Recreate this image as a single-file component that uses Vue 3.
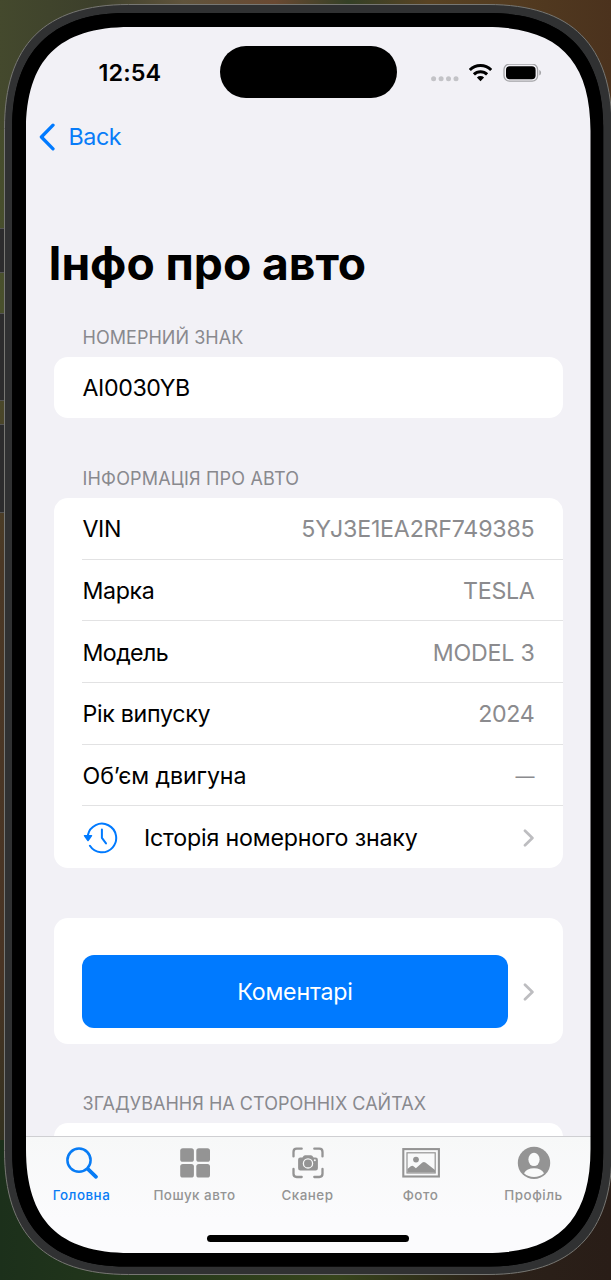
<script setup>
const rows = [
  { label: 'VIN', value: '5YJ3E1EA2RF749385', cls: 'vin' },
  { label: 'Марка', value: 'TESLA', cls: 'make' },
  { label: 'Модель', value: 'MODEL 3', cls: 'model' },
  { label: 'Рік випуску', value: '2024', cls: 'year' },
  { label: 'Об’єм двигуна', value: '—', cls: 'engine' },
]
const tabs = [
  { id: 'home', label: 'Головна' },
  { id: 'search', label: 'Пошук авто' },
  { id: 'scanner', label: 'Сканер' },
  { id: 'photo', label: 'Фото' },
  { id: 'profile', label: 'Профіль' },
]

// Rectangle with continuous-curvature corners: e is the corner extent, c the handle length.
function smoothRect(x, y, w, h, e, c) {
  const r = x + w
  const b = y + h
  const k = e - c
  return `M${x + e} ${y}H${r - e}C${r - k} ${y} ${r} ${y + k} ${r} ${y + e}V${b - e}` +
    `C${r} ${b - k} ${r - k} ${b} ${r - e} ${b}H${x + e}C${x + k} ${b} ${x} ${b - k} ${x} ${b - e}` +
    `V${y + e}C${x} ${y + k} ${x + k} ${y} ${x + e} ${y}Z`
}
const shellPath = smoothRect(4.5, 4.5, 607.5, 1270, 124, 83.7)
const bezelPath = smoothRect(12.2, 13, 591, 1253.5, 114, 74.7)
const screenPath = smoothRect(26, 27, 564.5, 1226, 104, 71.2)
</script>

<template>
  <div class="desktop">
    <i class="side-button action"></i>
    <i class="side-button up"></i>
    <i class="side-button down"></i>
    <svg class="device" width="611" height="1280" viewBox="0 0 611 1280">
      <path :d="shellPath" fill="#303132" stroke="#777773" stroke-width="1" />
      <path :d="bezelPath" fill="#000" />
      <path :d="screenPath" fill="#f2f1f6" />
    </svg>
    <div class="screen">
      <header class="status">
        <span class="time">12:54</span>
        <div class="island"></div>
        <svg class="indicators" width="112" height="24" viewBox="0 0 112 24">
          <g fill="#c3c3c7">
            <circle cx="3.6" cy="14.8" r="2.5" /><circle cx="11.1" cy="14.8" r="2.5" />
            <circle cx="18.5" cy="14.8" r="2.5" /><circle cx="26" cy="14.8" r="2.5" />
          </g>
          <g fill="none" stroke="#000" stroke-width="3">
            <path d="M39.8 6a15.2 15.2 0 0 1 21.4 0" />
            <path d="M43.9 10.4a9.4 9.4 0 0 1 13.2 0" />
          </g>
          <path d="M50.5 17.2l-3.6-3.7a5.2 5.2 0 0 1 7.2 0z" />
          <rect x="74" y="0.2" width="33.6" height="17" rx="5.4" fill="none" stroke="#a3a3a6" stroke-width="1.3" />
          <rect x="76" y="2.2" width="29.6" height="13" rx="3.7" />
          <path d="M109.3 6v5.6q1.8-.8 1.8-2.8t-1.8-2.8z" fill="#a3a3a6" />
        </svg>
      </header>
      <nav class="nav">
        <svg width="16" height="28" viewBox="0 0 16 28"><path d="M14 2.2L2.4 14 14 25.8" fill="none" stroke="#007aff" stroke-width="3.3" stroke-linecap="round" stroke-linejoin="round" /></svg>
        <span>Back</span>
      </nav>
      <h1>Інфо про авто</h1>
      <main>
        <h2 class="h-plate">НОМЕРНИЙ ЗНАК</h2>
        <section class="card plate">AI0030YB</section>
        <h2 class="h-info">ІНФОРМАЦІЯ ПРО АВТО</h2>
        <section class="card">
          <div v-for="row in rows" :key="row.label" class="row" :class="row.cls">
            <span class="label">{{ row.label }}</span>
            <span class="value">{{ row.value }}</span>
          </div>
          <div class="row history">
            <svg class="clock" width="36" height="34" viewBox="0 0 36 34">
              <g fill="none" stroke="#007aff" stroke-width="2" stroke-linecap="round" stroke-linejoin="round">
                <path d="M4.9 14A14.3 14.3 0 1 1 6.9 24.8" />
                <path d="M18.9 8.6v8.2l4.1 5.6" />
              </g>
              <path d="M1.5 14h7q1.3 0 .5 1.2l-3.2 4.5q-.8 1-1.6 0l-3.2-4.5q-.8-1.2.5-1.2z" fill="#007aff" />
            </svg>
            <span class="label">Історія номерного знаку</span>
            <svg class="chev" width="12" height="18" viewBox="0 0 12 18"><path d="M2 1.8L9.4 9 2 16.2" /></svg>
          </div>
        </section>
        <section class="card comments">
          <button>Коментарі</button>
          <svg class="chev" width="12" height="18" viewBox="0 0 12 18"><path d="M2 1.8L9.4 9 2 16.2" /></svg>
        </section>
        <h2 class="h-sites">ЗГАДУВАННЯ НА СТОРОННІХ САЙТАХ</h2>
        <section class="card partial"></section>
      </main>
      <footer class="tabbar">
        <div class="tabs">
          <div v-for="tab in tabs" :key="tab.id" class="tab" :class="tab.id">
            <svg v-if="tab.id === 'home'" width="40" height="34" viewBox="0 0 40 34">
              <g fill="none" stroke="currentColor" stroke-linecap="round"><circle cx="17" cy="14.2" r="11.6" stroke-width="2.5" /><path d="M26 23.2l8 7.6" stroke-width="3.8" /></g>
            </svg>
            <svg v-else-if="tab.id === 'search'" width="40" height="34" viewBox="0 0 40 34" fill="currentColor">
              <rect x="5.2" y="2.2" width="13.7" height="13.6" rx="2.6" /><rect x="21.3" y="2.2" width="13.7" height="13.6" rx="2.6" />
              <rect x="5.2" y="18" width="13.7" height="13.6" rx="2.6" /><rect x="21.3" y="18" width="13.7" height="13.6" rx="2.6" />
            </svg>
            <svg v-else-if="tab.id === 'scanner'" width="40" height="34" viewBox="0 0 40 34">
              <path d="M5.5 10.4V5.9q0-3.2 3.2-3.2h5M26.3 2.7h5q3.2 0 3.2 3.2v4.5M5.5 23v4.8q0 3.2 3.2 3.2h5M26.3 31h5q3.2 0 3.2-3.2V23" fill="none" stroke="currentColor" stroke-width="2.3" stroke-linecap="round" />
              <path d="M12.4 11.4h2l1.4-1.6q.5-.6 1.3-.6h5.8q.8 0 1.3.6l1.4 1.6h2q2.3 0 2.3 2.3v8.5q0 2.3-2.3 2.3H12.4q-2.3 0-2.3-2.3v-8.5q0-2.3 2.3-2.3z" fill="currentColor" />
              <circle cx="20" cy="17.4" r="4.6" fill="none" stroke="#f8f9f9" stroke-width="1.3" /><circle cx="26.8" cy="14.2" r="1" fill="#f8f9f9" />
            </svg>
            <svg v-else-if="tab.id === 'photo'" width="40" height="34" viewBox="0 0 40 34">
              <rect x="2.3" y="3.1" width="35.6" height="27.4" fill="none" stroke="currentColor" stroke-width="2.1" />
              <rect x="6" y="6.8" width="28.2" height="20.2" fill="none" stroke="currentColor" stroke-width="1.2" />
              <circle cx="15" cy="13.6" r="2.9" fill="currentColor" />
              <path d="M6.4 26.6v-3.5l3.4-2.8q1.6-1.1 3 .1l2.1 1.8 6.5-5.7q1.5-1.2 3 0l9.6 7.5v2.6z" fill="currentColor" />
            </svg>
            <svg v-else width="40" height="34" viewBox="0 0 40 34">
              <circle cx="20" cy="16.9" r="16.2" fill="currentColor" />
              <ellipse cx="20" cy="13.4" rx="5.6" ry="6.7" fill="#f9fafa" /><path d="M10 27.2q2.8-5 10-5t10 5q-4.2 3.8-10 3.8t-10-3.8z" fill="#f9fafa" />
            </svg>
            <span>{{ tab.label }}</span>
          </div>
        </div>
        <div class="home-indicator"></div>
      </footer>
    </div>
    <svg class="device corners" width="611" height="1280" viewBox="0 0 611 1280">
      <path :d="bezelPath + screenPath" fill="#000" fill-rule="evenodd" />
    </svg>
  </div>
</template>

<style>
body { margin: 0; overflow: hidden; }
</style>

<style scoped>
* { box-sizing: border-box; }
.desktop {
  position: relative; width: 611px; height: 1280px; overflow: hidden; padding: 27px 0 0 26px;
  font-family: Inter, "Liberation Sans", sans-serif; color: #000;
  background:
    linear-gradient(90deg, #44492d 0, #3c3f2b 16%, #60543c 30%, #6a4932 45%, #344026 57%, #594323 70%, #4b321d 100%) 0 0 / 100% 130px no-repeat,
    linear-gradient(90deg, #1c301b 0, #24381b 25%, #37451c 55%, #2b2119 80%, #291d17 100%) 0 100% / 100% 140px no-repeat,
    linear-gradient(#444a2d, #49502c 24%, #4b3825 44%, #493424 76%, #22301c);
}
.device { position: absolute; left: 0; top: 0; }
.corners { pointer-events: none; }
.side-button { position: absolute; left: 0; width: 5px; background: #2c2c2d; border-top: 1px solid #555; border-bottom: 1px solid #555; }
.action { top: 228px; height: 45px; }
.up { top: 313px; height: 88px; }
.down { top: 424px; height: 89px; }
.screen { position: relative; display: flex; flex-direction: column; width: 564.5px; height: 1226px; overflow: hidden; border-radius: 76px; background: #f2f1f6; white-space: nowrap; }
.status { display: grid; grid-template-columns: 194px 176.5px 1fr; height: 91px; padding-top: 19px; flex: none; }
.time { display: block; padding: 12px 0 0 72.5px; font-size: 23.4px; line-height: 30px; font-weight: 600; letter-spacing: .1px; }
.island { height: 52px; border-radius: 26px; background: #000; }
.indicators { margin: 18px 0 0 33.5px; }
.nav { display: flex; align-items: center; height: 37px; padding-left: 12.5px; gap: 14px; flex: none; color: #087cf8; font-size: 23.3px; letter-spacing: -.45px; }
h1 { margin: 71px 0 0 22.5px; height: 74px; line-height: 74px; font-size: 46.2px; font-weight: 700; letter-spacing: -.05px; flex: none; }
main { flex: 1; min-height: 0; overflow: hidden; padding: 0 28px; }
h2 { margin: 0; padding-left: 28.5px; height: 40px; padding-top: 8.5px; line-height: 24px; color: #89898e; font-size: 18px; font-weight: 400; }
.card { background: #fff; border-radius: 14px; }
.h-plate { margin-top: 17px; letter-spacing: .04px; }
.plate { height: 61px; padding-left: 28.5px; line-height: 63px; font-size: 23.2px; letter-spacing: -.4px; }
.h-info { margin-top: 40px; letter-spacing: .18px; }
.row { position: relative; display: flex; justify-content: space-between; align-items: center; height: 61.7px; padding: 1px 28px 0 28.5px; font-size: 23.2px; }
.row:not(:last-child)::after { content: ""; position: absolute; left: 28px; right: 0; bottom: 0; height: 1px; background: #e2e2e3; }
.value { color: #8b8b8e; }
.vin .label, .make .label { letter-spacing: -.4px; }
.vin .value { letter-spacing: -.2px; }
.make .value, .year .value { letter-spacing: -.3px; }
.model .value { letter-spacing: -.22px; }
.model .label { letter-spacing: -.6px; }
.year .label { letter-spacing: -.3px; }
.engine .label { letter-spacing: -.1px; }
.engine .value { font-size: 19px; }
.history { justify-content: flex-start; }
.clock { margin-left: .5px; }
.history .label { margin-left: 25px; letter-spacing: -.18px; }
.chev { margin-left: auto; }
.chev path { fill: none; stroke: #bdbdc0; stroke-width: 2.7; stroke-linecap: round; stroke-linejoin: round; }
.comments { display: flex; align-items: flex-start; margin-top: 49.8px; height: 126px; padding: 37.3px 28px 0; }
button { width: 426px; height: 73px; border: 0; padding: 1px 0 0; border-radius: 12px; background: #007aff; color: #fff; font: 400 23.2px Inter, sans-serif; letter-spacing: -.2px; }
.comments .chev { margin-top: 28px; }
.h-sites { margin-top: 39.2px; letter-spacing: .03px; }
.partial { height: 40px; }
.tabbar { flex: none; height: 117px; border-top: 1px solid #cfcfd2; background: linear-gradient(#f7f8f8, #fbfbfd 70%); }
.tabs { display: grid; grid-template-columns: repeat(5, 113px); height: 98px; padding-top: 9px; margin-left: -1px; }
.tab { display: flex; flex-direction: column; align-items: center; color: #949494; }
.tab span { margin-top: 6px; font-size: 13.4px; line-height: 18px; font-weight: 500; letter-spacing: .5px; }
.home { color: #087cf5; }
.home-indicator { width: 202px; height: 7px; margin: 0 auto; border-radius: 4px; background: #000; }
</style>
